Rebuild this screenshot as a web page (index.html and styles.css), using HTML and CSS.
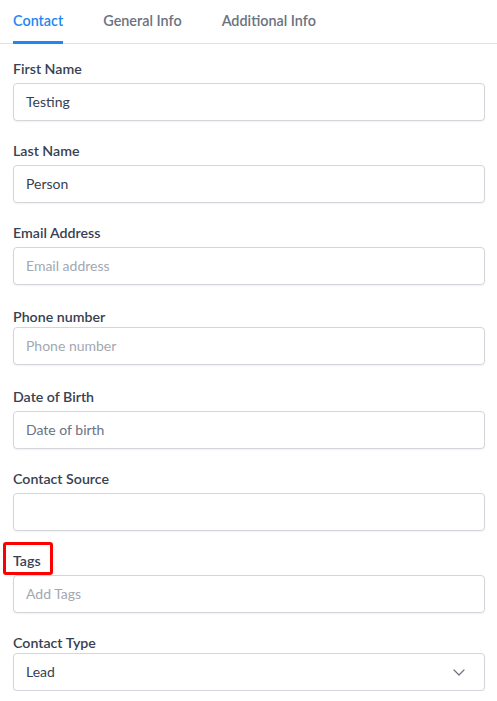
FILE: index.html
```html
<!DOCTYPE html>
<html lang="en">
<head>
<meta charset="utf-8">
<title>Contact</title>
<link rel="stylesheet" href="styles.css">
</head>
<body>
  <nav class="tabs">
    <div class="tab active">Contact</div>
    <div class="tab">General Info</div>
    <div class="tab">Additional Info</div>
  </nav>
  <form class="form">
    <div class="field">
      <label class="label">First Name</label>
      <div class="input">Testing</div>
    </div>
    <div class="field">
      <label class="label">Last Name</label>
      <div class="input">Person</div>
    </div>
    <div class="field">
      <label class="label">Email Address</label>
      <div class="input placeholder">Email address</div>
    </div>
    <div class="field field-phone">
      <label class="label">Phone number</label>
      <div class="input placeholder">Phone number</div>
    </div>
    <div class="field">
      <label class="label">Date of Birth</label>
      <div class="input muted">Date of birth</div>
    </div>
    <div class="field">
      <label class="label">Contact Source</label>
      <div class="input"></div>
    </div>
    <div class="field">
      <label class="label label-marked">Tags<span class="highlight"></span></label>
      <div class="input placeholder">Add Tags</div>
    </div>
    <div class="field field-select">
      <label class="label">Contact Type</label>
      <div class="input select">
        <span>Lead</span>
        <svg class="chevron" width="12" height="7" viewBox="0 0 12 7" aria-hidden="true"><path d="M1 1l5 5 5-5" fill="none" stroke="#6b7280" stroke-width="1.2" stroke-linecap="round" stroke-linejoin="round"/></svg>
      </div>
    </div>
  </form>
</body>
</html>
```
FILE: styles.css
```css
* { box-sizing: border-box; }

body {
  margin: 0;
  background: #ffffff;
  font-family: Lato, "Noto Sans", "Liberation Sans", sans-serif;
  color: #374151;
}

.tabs {
  display: flex;
  gap: 40px;
  padding-left: 13px;
  border-bottom: 1px solid #e2e2e2;
  height: 44px;
}

.tab {
  height: 44px;
  line-height: 42px;
  font-size: 14.4px;
  font-weight: 600;
  color: #6b7280;
  border-bottom: 3px solid transparent;
  margin-bottom: -1px;
}

.tab.active {
  color: #1e88f0;
  border-bottom-color: #1e88f0;
}

.form {
  display: flex;
  flex-direction: column;
  gap: 20px;
  padding: 15px 12px 0 13px;
}

.field {
  display: flex;
  flex-direction: column;
}

.label {
  display: block;
  height: 20px;
  line-height: 20px;
  font-size: 14.2px;
  font-weight: 600;
  color: #374151;
  margin-bottom: 4px;
}

.field-phone .label { margin-top: 2px; margin-bottom: 0; }
.field-phone { padding-bottom: 2px; }
.field-select .label { margin-bottom: 0; }

.label-marked {
  position: relative;
  align-self: flex-start;
}

.highlight {
  position: absolute;
  left: -10px;
  top: -9px;
  width: 50px;
  height: 33px;
  border: 3px solid #ff0000;
  border-radius: 3px;
}

.input {
  height: 38px;
  border: 1px solid #d4d6db;
  border-radius: 4px;
  box-shadow: 0 1px 2px rgba(0, 0, 0, 0.06);
  padding: 0 12px;
  font-size: 14px;
  line-height: 36px;
  color: #374151;
  background: #ffffff;
}

.placeholder { color: #a2a8b1; }
.muted { color: #6b7280; }

.select {
  display: flex;
  align-items: center;
  justify-content: space-between;
  padding-right: 19px;
}

.chevron { display: block; }
```
